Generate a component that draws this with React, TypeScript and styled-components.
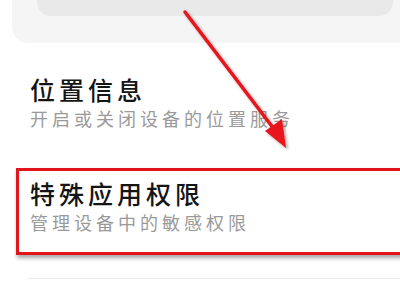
import * as React from 'react';
import styled, { createGlobalStyle } from 'styled-components';

const GlobalStyle = createGlobalStyle`
  html, body {
    margin: 0;
    padding: 0;
    background: #ffffff;
  }
  body {
    font-family: "Noto Sans CJK SC", "Noto Sans", sans-serif;
  }
`;

const settings = [
  { title: '位置信息', desc: '开启或关闭设备的位置服务', marked: false },
  { title: '特殊应用权限', desc: '管理设备中的敏感权限', marked: true },
];

const App: React.FunctionComponent = () => {
  return (
    <Screen>
      <GlobalStyle />
      <TopCard>
        <TopBar />
      </TopCard>
      <List>
        {settings.map(item => (
          <Row key={item.title} marked={item.marked}>
            <Title>{item.title}</Title>
            <Desc>{item.desc}</Desc>
          </Row>
        ))}
      </List>
      <Divider />
      <Arrow viewBox="0 0 400 300" width="400" height="300">
        <defs>
          <filter id="sh" x="-20%" y="-20%" width="140%" height="140%">
            <feDropShadow dx="2" dy="2" stdDeviation="1.5" floodColor="#000" floodOpacity="0.35" />
          </filter>
        </defs>
        <g filter="url(#sh)">
          <line x1="185" y1="12" x2="277" y2="133" stroke="#e8141b" strokeWidth="3.5" strokeLinecap="round" />
          <polygon points="286,148 265,131 282,119" fill="#e8141b" />
        </g>
      </Arrow>
    </Screen>
  );
};

export default App;

const Screen = styled.div`
  position: relative;
  width: 400px;
  height: 300px;
  overflow: hidden;
  background: #ffffff;
`;

const TopCard = styled.div`
  margin-left: 12px;
  margin-right: -20px;
  height: 43px;
  background: #f5f5f5;
  border-radius: 0 0 16px 16px;
`;

const TopBar = styled.div`
  margin-left: 25px;
  width: 356px;
  height: 16px;
  background: #e9e9e9;
  border-radius: 0 0 14px 14px;
`;

const List = styled.div`
  display: flex;
  flex-direction: column;
  padding-top: 32px;
  gap: 38px;
`;

const Row = styled.div<{ marked: boolean }>`
  display: flex;
  flex-direction: column;
  margin-left: ${p => (p.marked ? '16px' : '0')};
  margin-right: ${p => (p.marked ? '-20px' : '0')};
  padding: ${p => (p.marked ? '8px 0 18px 11px' : '0 0 0 30px')};
  border: ${p => (p.marked ? '3px solid #e1151b' : 'none')};
  box-shadow: ${p => (p.marked ? '1px 3px 4px rgba(0, 0, 0, 0.35)' : 'none')};
`;

const Title = styled.div`
  font-size: 25px;
  line-height: 28px;
  letter-spacing: 4px;
  color: #151515;
  font-weight: 500;
`;

const Desc = styled.div`
  margin-top: 3px;
  font-size: 18px;
  line-height: 24px;
  letter-spacing: 4px;
  color: #9a9a9a;
`;

const Divider = styled.div`
  margin-top: 23px;
  margin-left: 28px;
  height: 1px;
  background: #ececec;
`;

const Arrow = styled.svg`
  position: absolute;
  left: 0;
  top: 0;
  pointer-events: none;
`;
